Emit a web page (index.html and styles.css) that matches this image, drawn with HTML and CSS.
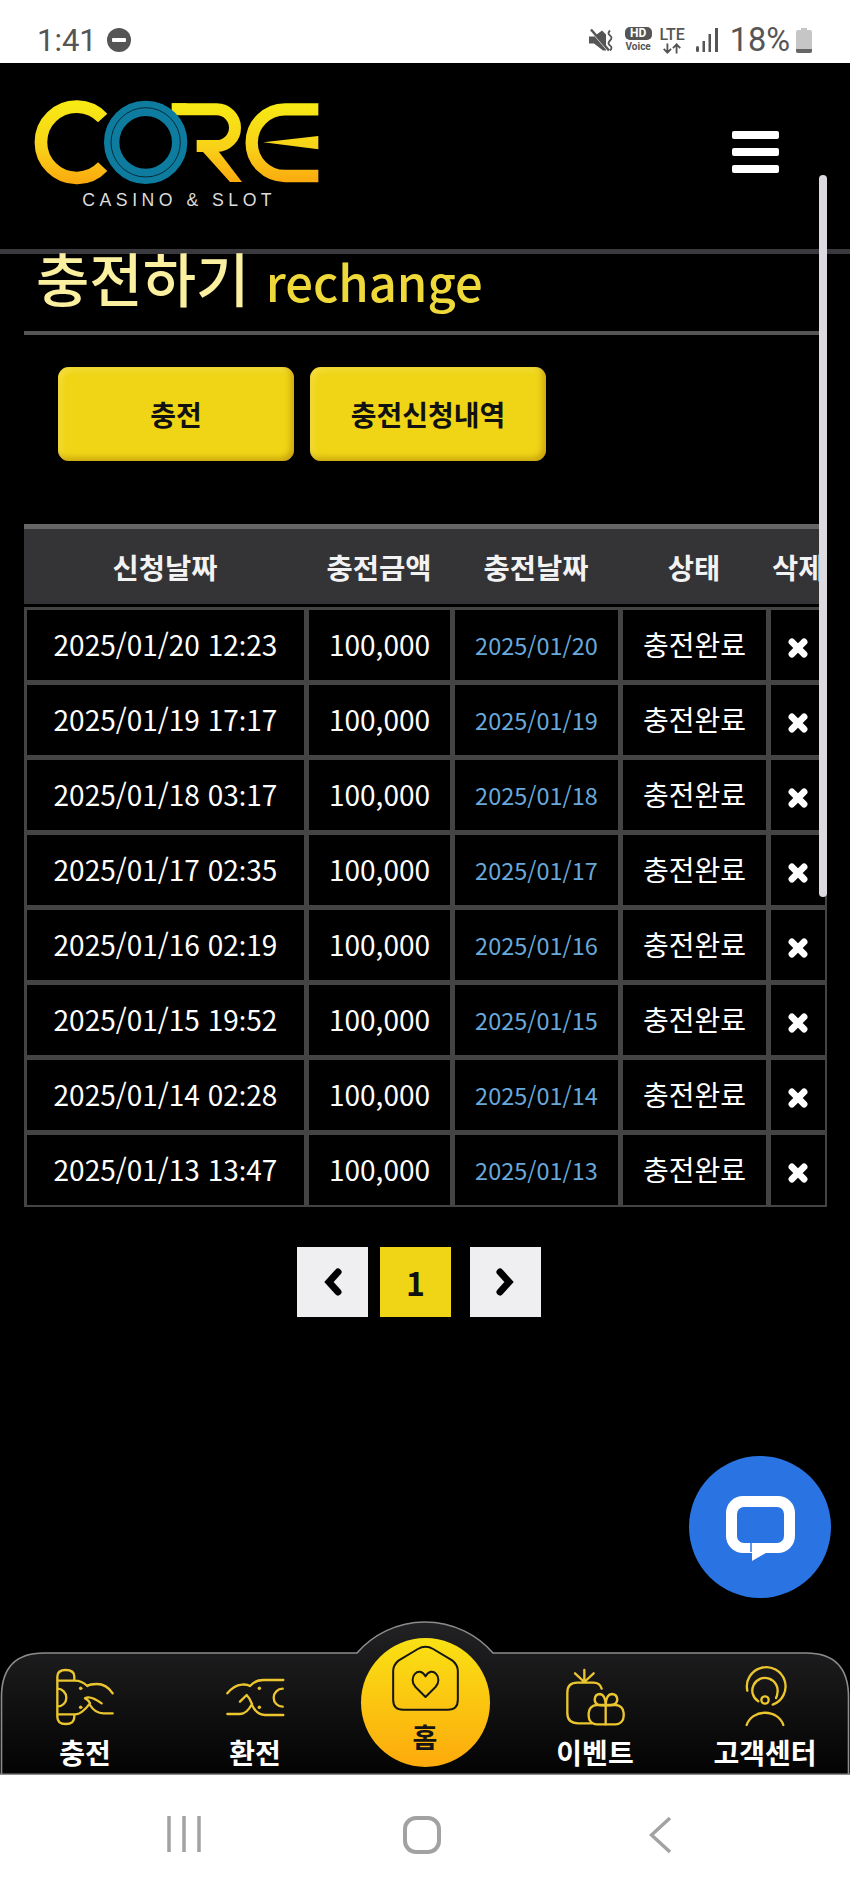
FILE: index.html
```html
<!DOCTYPE html>
<html lang="ko">
<head>
    <meta charset="UTF-8">
    <meta name="viewport" content="width=device-width, initial-scale=1.0">
    <title>충전하기</title>
    <link rel="stylesheet" href="styles.css">
</head>
<body>
    <!-- 상태바 -->
    <div class="status-bar">
        <div class="status-left">
            <span class="clock">1:41</span>
            <svg class="dnd" viewBox="0 0 24 24"><circle cx="12" cy="12" r="12" fill="#555"/><rect x="5" y="10" width="14" height="4" rx="1" fill="#fff"/></svg>
        </div>
        <div class="status-right">
            <svg class="mute" viewBox="0 0 24 24"><path d="M0 8h5l8-6 4 4v16h-3l-9-7H0z" fill="#555"/><path d="M2 2l18 21" stroke="#fff" stroke-width="2"/><path d="M2 1l18 21" stroke="#555" stroke-width="2.5"/><path d="M21 2q-3 3 0 5t0 5q-3 3 0 5t0 5" fill="none" stroke="#555" stroke-width="1.8"/></svg>
            <div class="hd-voice"><span class="hd">HD</span><span class="voice">Voice</span></div>
            <div class="lte">
                <span class="lte-text">LTE</span>
                <svg class="lte-arrows" viewBox="0 0 24 11"><path d="M7 0V10M3 6l4 4 4-4M17 11V1M13 5l4-4 4 4"/></svg>
            </div>
            <svg class="signal" viewBox="0 0 22 24"><rect x="0" y="18" width="3" height="6" rx="1.5" fill="#555"/><rect x="6.500" y="13" width="2.500" height="11" fill="#555"/><rect x="12.500" y="6" width="2.500" height="18" fill="#555"/><rect x="19" y="0" width="3" height="24" fill="#555"/></svg>
            <span class="battery-text">18%</span>
            <svg class="battery" viewBox="0 0 16 25"><path d="M5 0h6v2h3q2 0 2 2v19q0 2-2 2H2q-2 0-2-2V4q0-2 2-2h3z" fill="#c6c6c6"/><path d="M0 21h16v2q0 2-2 2H2q-2 0-2-2z" fill="#666"/></svg>
        </div>
    </div>

    <div class="page">
        <header class="top-header">
            <svg class="logo" viewBox="0 0 900 375">
                <defs>
                    <linearGradient id="logo-gold" gradientUnits="userSpaceOnUse" x1="0" y1="35" x2="0" y2="280">
                        <stop offset="0" stop-color="#f7ea14"/>
                        <stop offset="0.55" stop-color="#f8d218"/>
                        <stop offset="1" stop-color="#fba90e"/>
                    </linearGradient>
                </defs>
                <g fill="none" stroke="url(#logo-gold)" stroke-width="36">
                    <path d="M218 84A107 107 0 1 0 218 230" stroke-width="38"/>
                    <path d="M425 58H560A55 55 0 0 1 560 168H500"/>
                    <path d="M865 58H765A100 100 0 0 0 765 258H865" stroke-width="37"/>
                </g>
                <path d="M425 40H470V75Z" fill="url(#logo-gold)"/>
                <path d="M505 170H555L636 276H600Z" fill="url(#logo-gold)"/>
                <path d="M700 157L865 138V178Z" fill="url(#logo-gold)"/>
                <circle cx="347" cy="157" r="102" fill="none" stroke="#0d7c9f" stroke-width="46"/>
                <circle cx="347" cy="157" r="104" fill="none" stroke="#062a38" stroke-width="3"/>
                <text class="logo-sub" x="157" y="349" textLength="568">CASINO &amp; SLOT</text>
            </svg>
            <div class="menu-btn"><span></span><span></span><span></span></div>
        </header>

        <h1 class="page-title">충전하기 <small>rechange</small></h1>

        <div class="tabs">
            <a class="tab-btn">충전</a>
            <a class="tab-btn">충전신청내역</a>
        </div>

        <table class="list-table">
            <colgroup>
                <col class="col-req"><col class="col-amount"><col class="col-date"><col class="col-state"><col class="col-del">
            </colgroup>
            <thead>
                <tr><th>신청날짜</th><th>충전금액</th><th>충전날짜</th><th>상태</th><th><span class="th-del">삭제</span></th></tr>
            </thead>
            <tbody id="rows">
                <tr><td>2025/01/20 12<span class="colon">:</span>23</td><td>100,000</td><td class="date">2025/01/20</td><td>충전완료</td><td><svg class="del" viewBox="0 0 18 18"><path d="M3.500 3.500l11 11M14.500 3.500l-11 11"/></svg></td></tr>
                <tr><td>2025/01/19 17<span class="colon">:</span>17</td><td>100,000</td><td class="date">2025/01/19</td><td>충전완료</td><td><svg class="del" viewBox="0 0 18 18"><path d="M3.500 3.500l11 11M14.500 3.500l-11 11"/></svg></td></tr>
                <tr><td>2025/01/18 03<span class="colon">:</span>17</td><td>100,000</td><td class="date">2025/01/18</td><td>충전완료</td><td><svg class="del" viewBox="0 0 18 18"><path d="M3.500 3.500l11 11M14.500 3.500l-11 11"/></svg></td></tr>
                <tr><td>2025/01/17 02<span class="colon">:</span>35</td><td>100,000</td><td class="date">2025/01/17</td><td>충전완료</td><td><svg class="del" viewBox="0 0 18 18"><path d="M3.500 3.500l11 11M14.500 3.500l-11 11"/></svg></td></tr>
                <tr><td>2025/01/16 02<span class="colon">:</span>19</td><td>100,000</td><td class="date">2025/01/16</td><td>충전완료</td><td><svg class="del" viewBox="0 0 18 18"><path d="M3.500 3.500l11 11M14.500 3.500l-11 11"/></svg></td></tr>
                <tr><td>2025/01/15 19<span class="colon">:</span>52</td><td>100,000</td><td class="date">2025/01/15</td><td>충전완료</td><td><svg class="del" viewBox="0 0 18 18"><path d="M3.500 3.500l11 11M14.500 3.500l-11 11"/></svg></td></tr>
                <tr><td>2025/01/14 02<span class="colon">:</span>28</td><td>100,000</td><td class="date">2025/01/14</td><td>충전완료</td><td><svg class="del" viewBox="0 0 18 18"><path d="M3.500 3.500l11 11M14.500 3.500l-11 11"/></svg></td></tr>
                <tr><td>2025/01/13 13<span class="colon">:</span>47</td><td>100,000</td><td class="date">2025/01/13</td><td>충전완료</td><td><svg class="del" viewBox="0 0 18 18"><path d="M3.500 3.500l11 11M14.500 3.500l-11 11"/></svg></td></tr>
            </tbody>
        </table>

        <div class="pagination">
            <a class="page-btn"><svg class="chev" viewBox="0 0 24 30"><path d="M17 5L8 15l9 10"/></svg></a>
            <a class="page-btn current">1</a>
            <a class="page-btn next"><svg class="chev" viewBox="0 0 24 30"><path d="M6 5l9 10-9 10"/></svg></a>
        </div>

        <!-- 스크롤바 -->
        <div class="scroll-thumb"></div>

        <!-- 채팅 버튼 -->
        <a class="chat-btn">
            <svg viewBox="0 0 69 65">
                <rect x="0" y="0" width="69" height="57" rx="17" fill="#fff"/>
                <rect x="11" y="11" width="47" height="36" rx="7" fill="#2a73e3"/>
                <path d="M26 47V65L52 50Z" fill="#fff"/>
                <path d="M25 47V56" stroke="#2a73e3" stroke-width="1.500"/>
            </svg>
        </a>

        <!-- 하단 메뉴 -->
        <nav class="bottom-nav">
            <svg class="nav-bg" viewBox="0 0 850 154">
                <defs>
                    <linearGradient id="nav-fill" x1="0" y1="0" x2="0" y2="1">
                        <stop offset="0" stop-color="#222224"/>
                        <stop offset="1" stop-color="#030303"/>
                    </linearGradient>
                </defs>
                <path d="M1.500 154V76Q1.500 32 44 32H357A90 90 0 0 1 493 32H806Q848.500 32 848.500 76V154Z" fill="url(#nav-fill)" stroke="#8c8c8c" stroke-width="1.600"/>
                <path d="M0 153.200H850" stroke="#8c8c8c" stroke-width="1.600"/>
            </svg>
            <a class="nav-item">
                <svg class="nav-icon" viewBox="30 0 210 210"><path d="M52 62V50Q52 30 77 30 103 30 103 50V62M52 62V170Q52 192 77 192 103 192 103 170V163M52 62H105Q125 62 142 78 150 72 170 72 200 72 218 100M52 163H105Q125 163 150 130 144 118 135 115 150 105 185 130M150 135Q165 160 190 160H218M52 86A27 27 0 0 1 52 140"/><circle class="dot" cx="122" cy="85" r="4"/><circle class="dot" cx="122" cy="142" r="4"/></svg>
                <span class="nav-label">충전</span>
            </a>
            <a class="nav-item">
                <svg class="nav-icon" viewBox="540 0 210 210"><path d="M730 60H670Q645 60 630 78 620 72 605 74 582 76 562 100M562 162H600Q620 162 636 132 630 115 620 105L600 125M636 135Q650 165 675 165H730M728 86A27 27 0 0 0 728 140"/><circle class="dot" cx="658" cy="85" r="4"/><circle class="dot" cx="658" cy="142" r="4"/></svg>
                <span class="nav-label">환전</span>
            </a>
            <a class="nav-item home">
                <span class="home-circle">
                    <svg class="home-icon" viewBox="140 100 230 210"><path d="M158 185Q158 165 175 152L232 118Q255 105 278 118L335 152Q352 165 352 185V270Q352 300 322 300H188Q158 300 158 270Z"/><path d="M255 262L225 232C200 205 235 165 255 200 275 165 310 205 285 232Z"/></svg>
                    <span class="home-label">홈</span>
                </span>
            </a>
            <a class="nav-item">
                <svg class="nav-icon" viewBox="30 0 210 210"><path d="M103 30V66M75 40L103 66M131 40L103 66M155 86Q150 68 130 68H82Q52 68 52 98V160Q52 190 85 190H125"/><rect x="116" y="135" width="105" height="58" rx="24"/><path d="M167 135V193M167 135Q135 140 134 118 136 102 150 102 166 104 167 135 168 104 185 102 200 102 202 118 200 140 167 135"/></svg>
                <span class="nav-label">이벤트</span>
            </a>
            <a class="nav-item">
                <svg class="nav-icon" viewBox="540 0 210 210"><path d="M592 92A58 58 0 1 1 668 134M625 124A38 38 0 1 1 682 100Q682 108 678 114M590 195A57 50 0 0 1 700 195"/><circle cx="645" cy="120" r="11"/></svg>
                <span class="nav-label">고객센터</span>
            </a>
        </nav>
    </div>

    <!-- 안드로이드 네비게이션 -->
    <div class="android-nav">
        <svg class="recent" viewBox="0 0 34 36"><path d="M2 0V36M17 0V36M32 0V36"/></svg>
        <svg class="home-key" viewBox="0 0 38 38"><rect x="2" y="2" width="34" height="34" rx="11"/></svg>
        <svg class="back-key" viewBox="0 0 23 38"><path d="M21 2L2.500 19 21 36"/></svg>
    </div>
</body>
</html>
```

FILE: styles.css
```css
* {
    box-sizing: border-box;
}
body {
    margin: 0;
    width: 850px;
    height: 1889px;
    display: flex;
    flex-direction: column;
    overflow: hidden;
    background: #000;
    font-family: "Noto Sans CJK KR", "Noto Sans", sans-serif;
    color: #fff;
}

/* status bar */
.status-bar {
    height: 63px;
    flex: none;
    background: #fff;
    color: #555;
    display: flex;
    justify-content: space-between;
    padding: 0 38px 0 37px;
    font-family: Roboto, sans-serif;
}
.status-left, .status-right {
    display: flex;
    align-items: center;
    padding-top: 17px;
}
.clock {
    font-size: 31px;
    width: 70px;
}
.dnd {
    width: 24px;
    height: 24px;
}
.mute {
    width: 24px;
    height: 25px;
    margin-right: 12px;
}
.hd-voice {
    width: 27px;
    margin-right: 8px;
    display: flex;
    flex-direction: column;
    align-items: center;
}
.hd {
    width: 27px;
    height: 13px;
    border-radius: 5px;
    background: #555;
    color: #fff;
    font-size: 12px;
    font-weight: 700;
    line-height: 13px;
    text-align: center;
}
.voice {
    font-size: 10px;
    font-weight: 700;
    line-height: 13px;
}
.lte {
    width: 25px;
    margin-right: 11px;
    display: flex;
    flex-direction: column;
    align-items: center;
}
.lte-text {
    font-size: 16px;
    font-weight: 500;
    line-height: 15px;
}
.lte-arrows {
    width: 22px;
    height: 11px;
    margin-top: 1px;
    fill: none;
    stroke: #555;
    stroke-width: 2px;
}
.signal {
    width: 22px;
    height: 24px;
    margin-right: 12px;
}
.battery-text {
    font-size: 32.5px;
    margin-right: 6px;
}
.battery {
    width: 16px;
    height: 25px;
}

/* page */
.page {
    position: relative;
    flex: 1;
    overflow: hidden;
    background: #000;
}
.top-header {
    height: 191px;
    display: flex;
    justify-content: space-between;
    padding: 27px 71px 0 30px;
    border-bottom: 5px solid #3a3a3e;
}
.logo {
    width: 300px;
    height: 125px;
}
.logo-sub {
    fill: #dcdcdc;
    font-family: "Liberation Sans", sans-serif;
    font-size: 53px;
}
.menu-btn {
    width: 47px;
    margin-top: 41px;
    display: flex;
    flex-direction: column;
    gap: 9px;
}
.menu-btn span {
    height: 8px;
    background: #fff;
    border-radius: 2px;
}
.page-title {
    margin: 0 31px 0 24px;
    height: 81px;
    padding-left: 12px;
    border-bottom: 4px solid #555;
    font-size: 58px;
    font-weight: 500;
    line-height: 46px;
    color: #fbf0a0;
    white-space: nowrap;
}
.page-title small {
    font-size: 49px;
    font-weight: 500;
    color: #eed83a;
}
.tabs {
    display: flex;
    gap: 16px;
    margin: 32px 0 63px 58px;
}
.tab-btn {
    width: 236px;
    height: 94px;
    border-radius: 11px;
    background: #efd516;
    box-shadow: inset -3px -3px 6px rgba(150, 100, 0, 0.45), inset 3px 3px 6px rgba(255, 235, 110, 0.5);
    color: #111;
    font-size: 28px;
    font-weight: 700;
    display: flex;
    align-items: center;
    justify-content: center;
}

/* table */
.list-table {
    width: 803px;
    margin-left: 24px;
    table-layout: fixed;
    border-collapse: separate;
    border-spacing: 0;
}
.col-req { width: 282px; }
.col-amount { width: 146px; }
.col-date { width: 168px; }
.col-state { width: 148px; }
.col-del { width: 59px; }
.list-table th {
    height: 83px;
    padding: 0;
    background: #343336 padding-box;
    border-top: 5px solid #666;
    border-bottom: 3px solid #000;
    font-size: 28.5px;
    font-weight: 700;
    color: #f2f2f2;
    white-space: nowrap;
}
.th-del {
    display: block;
    width: 51px;
    padding-left: 4px;
    overflow: hidden;
}
.list-table td {
    height: 75px;
    padding: 0 0 3px;
    border-style: solid;
    border-color: #444;
    border-width: 3px 2px 2px 3px;
    background: #000;
    text-align: center;
    font-size: 28px;
    white-space: nowrap;
    vertical-align: middle;
}
.colon {
    font-family: "Noto Sans", sans-serif;
}
.list-table td.date {
    padding-top: 3px;
    font-size: 23.5px;
    color: #69a8da;
}
.del {
    display: block;
    width: 20px;
    height: 20px;
    margin: 8px auto 0 17px;
}
.del path {
    fill: none;
    stroke: #fff;
    stroke-width: 6px;
    stroke-linecap: round;
}

/* pagination */
.pagination {
    display: flex;
    gap: 12px;
    margin: 40px 0 0 297px;
}
.page-btn {
    width: 71px;
    height: 70px;
    background: #efeef0;
    color: #111;
    display: flex;
    align-items: center;
    justify-content: center;
}
.page-btn.current {
    background: #efd516;
    font-size: 32px;
    font-weight: 700;
}
.page-btn.next {
    margin-left: 7px;
}
.chev {
    width: 24px;
    height: 30px;
}
.chev path {
    fill: none;
    stroke: #000;
    stroke-width: 7px;
    stroke-linecap: round;
    stroke-linejoin: miter;
}

/* overlays */
.scroll-thumb {
    position: absolute;
    top: 112px;
    right: 23px;
    width: 8px;
    height: 722px;
    border-radius: 4px;
    background: #dddadf;
}
.chat-btn {
    position: absolute;
    right: 19px;
    bottom: 177px;
    width: 142px;
    height: 142px;
    border-radius: 50%;
    background: #2a73e3;
    display: flex;
    align-items: center;
    justify-content: center;
}
.chat-btn svg {
    width: 69px;
    height: 65px;
    margin-top: 2px;
}

/* bottom nav */
.bottom-nav {
    position: absolute;
    left: 0;
    right: 0;
    bottom: 0;
    height: 154px;
    display: grid;
    grid-template-columns: repeat(5, 1fr);
}
.nav-bg {
    position: absolute;
    left: 0;
    top: 0;
    width: 850px;
    height: 154px;
}
.nav-item {
    position: relative;
    display: flex;
    flex-direction: column;
    align-items: center;
    padding-top: 39px;
}
.nav-icon {
    width: 70px;
    height: 70px;
}
.nav-icon path, .nav-icon rect, .nav-icon circle {
    fill: none;
    stroke: #ecc62e;
    stroke-width: 7px;
    stroke-linecap: round;
    stroke-linejoin: round;
}
.nav-icon .dot {
    fill: #ecc62e;
    stroke-width: 3px;
}
.nav-label {
    margin-top: 5px;
    font-size: 28px;
    font-weight: 700;
    line-height: 34px;
    white-space: nowrap;
}
.nav-item.home {
    padding-top: 17px;
}
.home-circle {
    width: 129px;
    height: 129px;
    border-radius: 50%;
    background: linear-gradient(#f9e114, #fdaa0c);
    display: flex;
    flex-direction: column;
    align-items: center;
    padding-top: 5px;
}
.home-icon {
    width: 77px;
    height: 70px;
}
.home-icon path {
    fill: none;
    stroke: #151515;
    stroke-width: 6px;
    stroke-linejoin: round;
}
.home-label {
    margin-top: 9px;
    color: #151515;
    font-size: 27px;
    font-weight: 700;
    line-height: 30px;
}

/* android nav */
.android-nav {
    height: 114px;
    flex: none;
    background: #fff;
    display: flex;
    align-items: flex-start;
    padding: 41px 0 0 167px;
}
.android-nav svg {
    fill: none;
    stroke: #a2a2a2;
}
.recent {
    width: 34px;
    height: 36px;
    stroke-width: 3.5px;
    margin-right: 202px;
}
.home-key {
    width: 38px;
    height: 38px;
    stroke-width: 4px;
    margin-right: 208px;
}
.back-key {
    width: 23px;
    height: 38px;
    stroke-width: 3.5px;
}
```
